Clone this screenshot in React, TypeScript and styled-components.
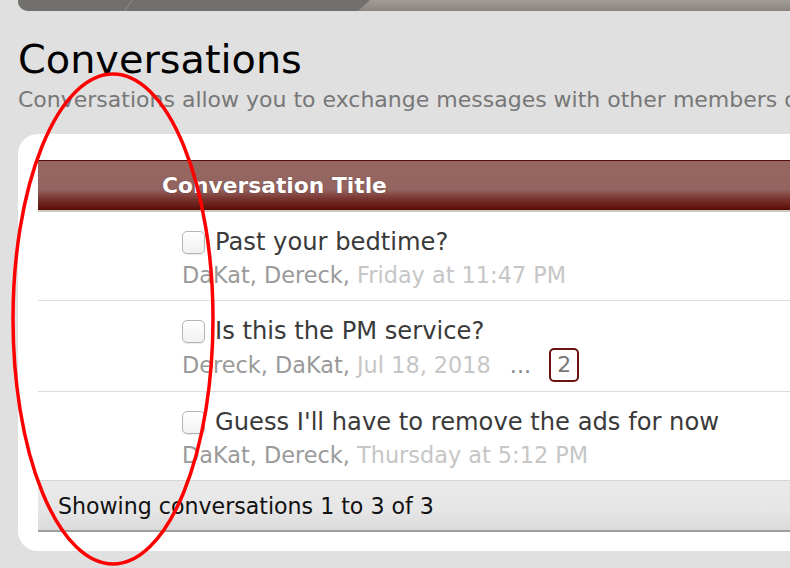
import React from "react";
import styled, { createGlobalStyle } from "styled-components";

const GlobalStyle = createGlobalStyle`
  html, body {
    margin: 0;
    padding: 0;
    background: #e0e0e0;
    overflow: hidden;
  }
  body {
    font-family: "DejaVu Sans", Verdana, sans-serif;
  }
`;

const Page = styled.div`
  position: relative;
  width: 790px;
  height: 568px;
  overflow: hidden;
  background: #e0e0e0;
`;

const Content = styled.div`
  width: 1100px;
  padding-left: 18px;
`;

const NavBar = styled.div`
  display: flex;
  height: 11px;
  border-bottom-left-radius: 10px;
  overflow: hidden;
  background: linear-gradient(to bottom, #a19c97, #8b8681);
`;

const NavTab = styled.div`
  position: relative;
  width: 352px;
  height: 100%;
  background: #72706d;
  clip-path: polygon(0 0, 100% 0, calc(100% - 12px) 100%, 0 100%);
  &::before {
    content: "";
    position: absolute;
    left: 110px;
    top: 0;
    width: 1px;
    height: 100%;
    background: rgba(255, 255, 255, 0.22);
    transform: skewX(-35deg);
  }
`;

const Title = styled.h1`
  margin: 24px 0 0;
  font-size: 39.8px;
  line-height: 48px;
  font-weight: normal;
  color: #000;
`;

const Description = styled.p`
  margin: 4px 0 0;
  font-size: 22px;
  line-height: 26px;
  color: #777;
  white-space: nowrap;
`;

const Panel = styled.div`
  margin-top: 21px;
  background: #fff;
  border-radius: 20px;
  padding: 26px 0 19px 20px;
`;

const HeaderBar = styled.div`
  display: flex;
  align-items: center;
  height: 49px;
  padding-left: 124px;
  border-top: 1px solid #5a0c08;
  border-bottom: 2px solid #cbc7c3;
  background: linear-gradient(
    to bottom,
    #966661 0%,
    #946460 58%,
    #7a3732 76%,
    #5a0b06 100%
  );
  color: #fff;
  font-weight: bold;
  font-size: 21.8px;
  text-shadow: 0 0 1px rgba(40, 10, 10, 0.6);
`;

const Row = styled.div<{ $last?: boolean }>`
  padding: 15px 0 12px 144px;
  border-bottom: ${(p) => (p.$last ? "none" : "1px solid #dcdcdc")};
`;

const TitleLine = styled.div`
  display: flex;
  align-items: center;
  gap: 10px;
  height: 30px;
`;

const Check = styled.input.attrs({ type: "checkbox" })`
  appearance: none;
  -webkit-appearance: none;
  margin: 0;
  width: 23px;
  height: 23px;
  border: 1px solid #b4b4b4;
  border-radius: 5px;
  background: linear-gradient(to bottom, #ffffff, #f1f1f1);
  box-shadow: 0 1px 1px rgba(0, 0, 0, 0.08);
  flex: none;
`;

const ConvTitle = styled.span`
  font-size: 24.2px;
  line-height: 30px;
  color: #3a3a3a;
`;

const MetaLine = styled.div`
  display: flex;
  align-items: center;
  margin-top: 5px;
  min-height: 26px;
  font-size: 22.4px;
  line-height: 26px;
  white-space: pre;
`;

const Names = styled.span`
  color: #9a9a9a;
`;

const DateText = styled.span`
  color: #c6c6c6;
`;

const Dots = styled.span`
  margin-left: 19px;
  color: #8a8a8a;
`;

const PageBox = styled.span`
  display: flex;
  align-items: center;
  justify-content: center;
  margin: -3px 0 -3px 18px;
  width: 30px;
  height: 34px;
  box-sizing: border-box;
  border: 2px solid #6a1510;
  border-radius: 5px;
  color: #777;
  font-size: 22px;
`;

const Footer = styled.div`
  display: flex;
  align-items: center;
  height: 49px;
  padding-left: 20px;
  border-top: 1px solid #d6d6d6;
  border-bottom: 2px solid #a29e9a;
  background: linear-gradient(to bottom, #eaeaea 0%, #e6e6e6 60%, #dadada 100%);
  font-size: 22.1px;
  color: #111;
`;

const Annotation = styled.svg`
  position: absolute;
  left: 0;
  top: 0;
  width: 790px;
  height: 568px;
  pointer-events: none;
`;

type Conv = {
  title: string;
  names: string;
  date: string;
  pages?: number;
};

const conversations: Conv[] = [
  { title: "Past your bedtime?", names: "DaKat, Dereck, ", date: "Friday at 11:47 PM" },
  { title: "Is this the PM service?", names: "Dereck, DaKat, ", date: "Jul 18, 2018", pages: 2 },
  {
    title: "Guess I'll have to remove the ads for now",
    names: "DaKat, Dereck, ",
    date: "Thursday at 5:12 PM",
  },
];

export default function App() {
  return (
    <>
      <GlobalStyle />
      <Page>
        <Content>
          <NavBar>
            <NavTab />
          </NavBar>
          <Title>Conversations</Title>
          <Description>
            Conversations allow you to exchange messages with other members of the community.
          </Description>
          <Panel>
            <HeaderBar>Conversation Title</HeaderBar>
            {conversations.map((c, i) => (
              <Row key={c.title} $last={i === conversations.length - 1}>
                <TitleLine>
                  <Check readOnly />
                  <ConvTitle>{c.title}</ConvTitle>
                </TitleLine>
                <MetaLine>
                  <Names>{c.names}</Names>
                  <DateText>{c.date}</DateText>
                  {c.pages ? (
                    <>
                      <Dots>...</Dots>
                      <PageBox>{c.pages}</PageBox>
                    </>
                  ) : null}
                </MetaLine>
              </Row>
            ))}
            <Footer>Showing conversations 1 to 3 of 3</Footer>
          </Panel>
        </Content>
        <Annotation viewBox="0 0 790 568">
          <ellipse cx="113" cy="319" rx="100" ry="245" fill="none" stroke="#ff0000" strokeWidth="3.5" />
        </Annotation>
      </Page>
    </>
  );
}
